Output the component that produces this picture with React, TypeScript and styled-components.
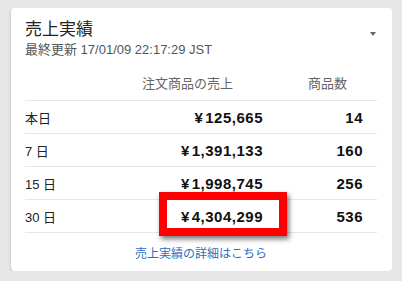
import React from 'react'
import styled, { createGlobalStyle } from 'styled-components'

type SalesRow = {
  label: string
  sales: string
  count: number
  highlight?: boolean
}

const rows: SalesRow[] = [
  { label: '本日', sales: '125,665', count: 14 },
  { label: '7 日', sales: '1,391,133', count: 160 },
  { label: '15 日', sales: '1,998,745', count: 256 },
  { label: '30 日', sales: '4,304,299', count: 536, highlight: true },
]

function App() {
  return (
    <>
      <GlobalStyle />
      <Card>
        <CardHeader>
          <div>
            <Title>売上実績</Title>
            <Updated>最終更新 17/01/09 22:17:29 JST</Updated>
          </div>
          <Caret />
        </CardHeader>

        <HeadRow>
          <span />
          <HeadCell>注文商品の売上</HeadCell>
          <HeadCell>商品数</HeadCell>
        </HeadRow>

        {rows.map((r) => (
          <Row key={r.label}>
            <Label>{r.label}</Label>
            <Sales>
              <Yen>¥</Yen>{r.sales}
              {r.highlight && <Highlight />}
            </Sales>
            <Count>{r.count}</Count>
          </Row>
        ))}

        <Footer>
          <DetailLink href="#">売上実績の詳細はこちら</DetailLink>
        </Footer>
      </Card>
    </>
  )
}

const GlobalStyle = createGlobalStyle`
  html, body {
    margin: 0;
    padding: 0;
    background: #e7e7e7;
  }
  body {
    font-family: "Liberation Sans", "Noto Sans CJK JP", sans-serif;
    color: #222;
  }
`

const Card = styled.div`
  box-sizing: border-box;
  width: 381px;
  height: 263px;
  margin: 8px 0 0 11px;
  padding: 12px 15px 0 14px;
  background: #fff;
  border-radius: 4px;
  box-shadow: -1px 1px 2px rgba(0, 0, 0, 0.12);
`

const CardHeader = styled.div`
  display: flex;
  justify-content: space-between;
  align-items: flex-start;
`

const Title = styled.div`
  font-size: 17px;
  line-height: 20px;
  color: #222;
`

const Updated = styled.div`
  margin-top: 2px;
  font-size: 13px;
  line-height: 16px;
  color: #555;
`

const Caret = styled.span`
  margin: 12px 1px 0 0;
  width: 0;
  height: 0;
  border-left: 3px solid transparent;
  border-right: 3px solid transparent;
  border-top: 4px solid #666;
`

const Grid = styled.div`
  display: grid;
  grid-template-columns: 1fr 140px 114px;
  align-items: center;
  border-bottom: 1px solid #e6e6e6;
`

const HeadRow = styled(Grid)`
  padding: 18px 0 8px;
`

const HeadCell = styled.span`
  text-align: right;
  padding-right: 30px;
  font-size: 13px;
  line-height: 16px;
  color: #666;
`

const Row = styled(Grid)`
  height: 32px;
`

const Label = styled.span`
  font-size: 13px;
  color: #222;
`

const Sales = styled.span`
  position: relative;
  text-align: right;
  font-size: 15px;
  font-weight: bold;
  letter-spacing: 0.5px;
  color: #111;
`

const Yen = styled.span`
  margin-right: 2px;
`

const Count = styled.span`
  text-align: right;
  padding-right: 14px;
  font-size: 15px;
  font-weight: bold;
  letter-spacing: 0.5px;
  color: #111;
`

const Highlight = styled.span`
  position: absolute;
  right: -24px;
  top: calc(50% - 24px);
  width: 128px;
  height: 44px;
  box-sizing: border-box;
  border: 8px solid #f00;
  box-shadow: 2px 3px 5px rgba(0, 0, 0, 0.55);
  pointer-events: none;
`

const Footer = styled.div`
  padding-top: 11px;
  text-align: center;
`

const DetailLink = styled.a`
  font-size: 12px;
  line-height: 14px;
  color: #2c6fc0;
  text-decoration: none;
`

export default App
